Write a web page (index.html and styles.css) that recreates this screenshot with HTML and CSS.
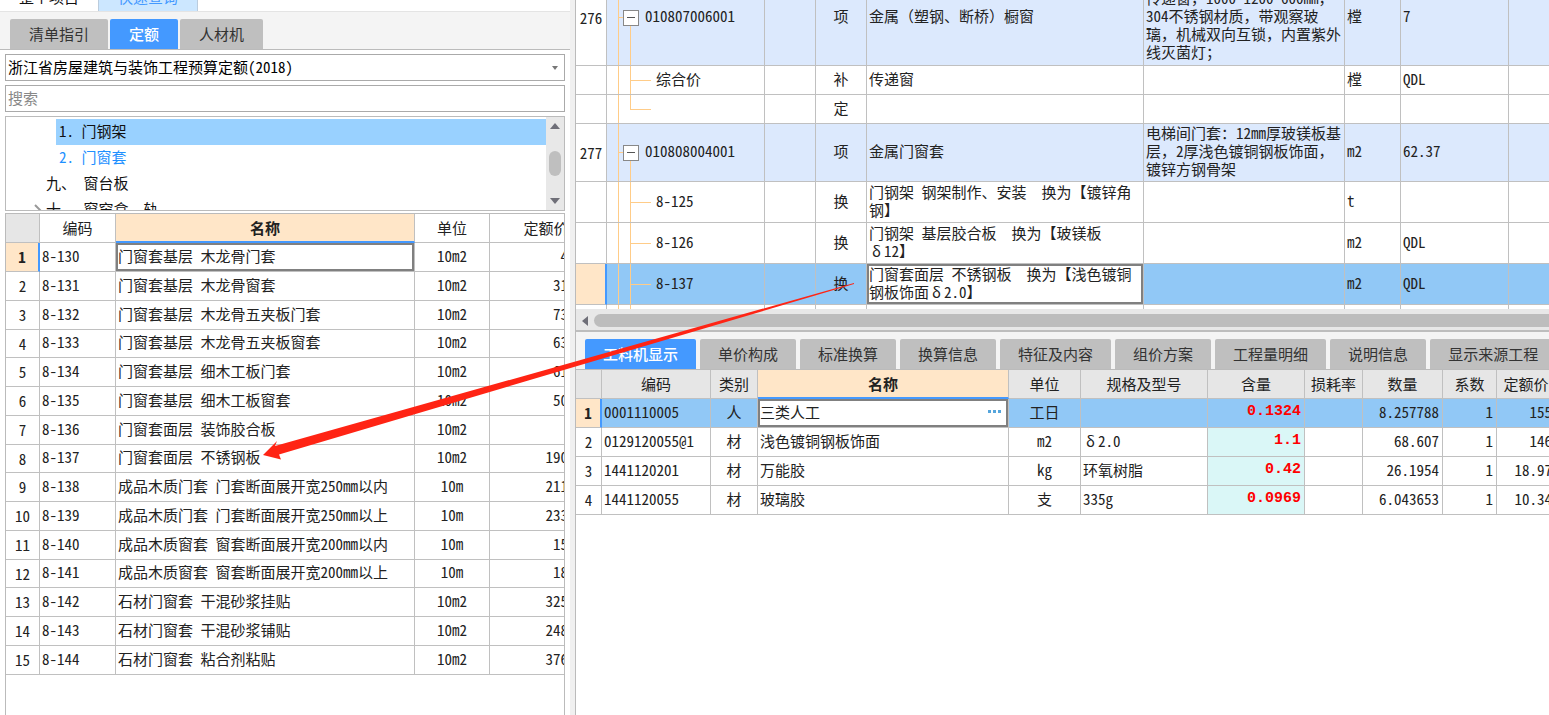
FILE: index.html
```html
<!DOCTYPE html>
<html lang="zh-CN">
<head>
<meta charset="utf-8">
<title>定额查询</title>
<link rel="stylesheet" href="styles.css">
</head>
<body>
<div class="app">
  <aside class="query">
    <nav class="views">
      <button class="view">整个项目</button>
      <button class="view view-on">快速查询</button>
    </nav>
    <nav class="tabs query-tabs">
      <button class="tab">清单指引</button>
      <button class="tab tab-on">定额</button>
      <button class="tab">人材机</button>
    </nav>
    <div class="query-body">
      <div class="picker">
        <select class="field" aria-label="定额库"><option>浙江省房屋建筑与装饰工程预算定额(2018)</option></select>
        <svg class="picker-arrow" viewBox="0 0 8 6" aria-hidden="true"><path d="M1 1h6L4 5z"/></svg>
      </div>
      <input class="field" type="text" placeholder="搜索" aria-label="搜索">
      <div class="tree">
        <ul class="tree-list">
          <li class="leaf leaf-on">1. 门钢架</li>
          <li class="leaf leaf-link">2. 门窗套</li>
          <li class="branch">九、 窗台板</li>
          <li class="branch"><svg class="chevron" viewBox="0 0 8 12" aria-hidden="true"><path d="M1 1l5 5-5 5"/></svg>十、 窗帘盒、轨</li>
        </ul>
        <div class="vbar">
          <svg viewBox="0 0 10 6" aria-hidden="true"><path d="M0 6h10L5 0z"/></svg>
          <span class="vthumb"></span>
          <svg viewBox="0 0 10 6" aria-hidden="true"><path d="M0 0h10L5 6z"/></svg>
        </div>
      </div>
      <div class="quota">
        <table class="grid quota-grid">
          <colgroup><col class="w34"><col class="w76"><col class="w299"><col class="w75"><col class="w113"></colgroup>
          <thead><tr><th class="corner"></th><th>编码</th><th class="current">名称</th><th>单位</th><th>定额价</th></tr></thead>
          <tbody>
            <tr class="picked"><th>1</th><td>8-130</td><td class="cursor">门窗套基层 木龙骨门套</td><td class="mid">10m2</td><td class="cut">4</td></tr>
            <tr><th>2</th><td>8-131</td><td>门窗套基层 木龙骨窗套</td><td class="mid">10m2</td><td class="cut">31</td></tr>
            <tr><th>3</th><td>8-132</td><td>门窗套基层 木龙骨五夹板门套</td><td class="mid">10m2</td><td class="cut">73</td></tr>
            <tr><th>4</th><td>8-133</td><td>门窗套基层 木龙骨五夹板窗套</td><td class="mid">10m2</td><td class="cut">63</td></tr>
            <tr><th>5</th><td>8-134</td><td>门窗套基层 细木工板门套</td><td class="mid">10m2</td><td class="cut">61</td></tr>
            <tr><th>6</th><td>8-135</td><td>门窗套基层 细木工板窗套</td><td class="mid">10m2</td><td class="cut">50</td></tr>
            <tr><th>7</th><td>8-136</td><td>门窗套面层 装饰胶合板</td><td class="mid">10m2</td><td class="cut"></td></tr>
            <tr><th>8</th><td>8-137</td><td>门窗套面层 不锈钢板</td><td class="mid">10m2</td><td class="cut">190</td></tr>
            <tr><th>9</th><td>8-138</td><td>成品木质门套 门套断面展开宽250mm以内</td><td class="mid">10m</td><td class="cut">211</td></tr>
            <tr><th>10</th><td>8-139</td><td>成品木质门套 门套断面展开宽250mm以上</td><td class="mid">10m</td><td class="cut">233</td></tr>
            <tr><th>11</th><td>8-140</td><td>成品木质窗套 窗套断面展开宽200mm以内</td><td class="mid">10m</td><td class="cut">15</td></tr>
            <tr><th>12</th><td>8-141</td><td>成品木质窗套 窗套断面展开宽200mm以上</td><td class="mid">10m</td><td class="cut">18</td></tr>
            <tr><th>13</th><td>8-142</td><td>石材门窗套 干混砂浆挂贴</td><td class="mid">10m2</td><td class="cut">325</td></tr>
            <tr><th>14</th><td>8-143</td><td>石材门窗套 干混砂浆铺贴</td><td class="mid">10m2</td><td class="cut">248</td></tr>
            <tr><th>15</th><td>8-144</td><td>石材门窗套 粘合剂粘贴</td><td class="mid">10m2</td><td class="cut">376</td></tr>
          </tbody>
        </table>
      </div>
    </div>
  </aside>

  <main class="work">
    <section class="bill">
      <table class="grid bill-grid">
        <colgroup><col class="w31"><col class="w158"><col class="w51"><col class="w51"><col class="w277"><col class="w201"><col class="w56"><col class="w108"><col class="w108"></colgroup>
        <tbody>
          <tr class="item tall"><th>276</th><td class="code parent"><button class="fold" aria-label="折叠"></button>010807006001</td><td></td><td class="mid">项</td><td class="full">金属（塑钢、断桥）橱窗</td><td class="spec scrolled">传递窗<span class="full">，</span>1000*1200*600mm<span class="full">，</span><br>304不锈钢材质<span class="full">，</span>带观察玻<br>璃<span class="full">，</span>机械双向互锁<span class="full">，</span>内置紫外<br>线灭菌灯<span class="full">；</span></td><td>樘</td><td>7</td><td></td></tr>
          <tr class="h29"><th></th><td class="code child">综合价</td><td></td><td class="mid">补</td><td>传递窗</td><td></td><td>樘</td><td>QDL</td><td></td></tr>
          <tr class="h29"><th></th><td class="code child last"></td><td></td><td class="mid">定</td><td></td><td></td><td></td><td></td><td></td></tr>
          <tr class="item h58"><th>277</th><td class="code parent"><button class="fold" aria-label="折叠"></button>010808004001</td><td></td><td class="mid">项</td><td>金属门窗套</td><td class="spec">电梯间门套<span class="full">：</span>12mm厚玻镁板基<br>层<span class="full">，</span>2厚浅色镀铜钢板饰面<span class="full">，</span><br>镀锌方钢骨架</td><td>m2</td><td>62.37</td><td></td></tr>
          <tr class="h41"><th></th><td class="code child">8-125</td><td></td><td class="mid">换</td><td class="lines">门钢架 钢架制作、安装<span class="full">　</span>换为【镀锌角<br>钢】</td><td></td><td>t</td><td></td><td></td></tr>
          <tr class="h41"><th></th><td class="code child">8-126</td><td></td><td class="mid">换</td><td class="lines">门钢架 基层胶合板<span class="full">　</span>换为【玻镁板<br><span class="wide">δ</span>12】</td><td></td><td>m2</td><td>QDL</td><td></td></tr>
          <tr class="picked filled h41"><th></th><td class="code child">8-137</td><td></td><td class="mid">换</td><td class="lines cursor">门窗套面层 不锈钢板<span class="full">　</span>换为【浅色镀铜<br>钢板饰面<span class="wide">δ</span>2.0】</td><td></td><td>m2</td><td>QDL</td><td></td></tr>
          <tr class="h3"><th></th><td class="code child"></td><td></td><td></td><td></td><td></td><td></td><td></td><td></td></tr>
        </tbody>
      </table>
    </section>
    <div class="hbar">
      <svg viewBox="0 0 6 10" aria-hidden="true"><path d="M6 0v10L0 5z"/></svg>
      <span class="hthumb"></span>
    </div>
    <nav class="tabs work-tabs">
      <button class="tab tab-on">工料机显示</button>
      <button class="tab">单价构成</button>
      <button class="tab">标准换算</button>
      <button class="tab">换算信息</button>
      <button class="tab">特征及内容</button>
      <button class="tab">组价方案</button>
      <button class="tab">工程量明细</button>
      <button class="tab">说明信息</button>
      <button class="tab">显示来源工程</button>
    </nav>
    <section class="parts">
      <table class="grid parts-grid">
        <colgroup><col class="w26"><col class="w109"><col class="w47"><col class="w251"><col class="w72"><col class="w127"><col class="w97"><col class="w58"><col class="w80"><col class="w54"><col class="w59"></colgroup>
        <thead><tr><th></th><th>编码</th><th>类别</th><th class="current">名称</th><th>单位</th><th>规格及型号</th><th>含量</th><th>损耗率</th><th>数量</th><th>系数</th><th>定额价</th></tr></thead>
        <tbody>
          <tr class="picked filled"><th>1</th><td>0001110005</td><td class="mid">人</td><td class="cursor"><div class="editing">三类人工<button class="more" aria-label="更多"><svg viewBox="0 0 14 3" aria-hidden="true"><path d="M0 0h3v3H0zM5 0h3v3H5zM10 0h3v3h-3z"/></svg></button></div></td><td class="mid">工日</td><td></td><td class="rate">0.1324</td><td></td><td class="num">8.257788</td><td class="num">1</td><td class="num">155</td></tr>
          <tr><th>2</th><td>0129120055@1</td><td class="mid">材</td><td>浅色镀铜钢板饰面</td><td class="mid">m2</td><td><span class="wide">δ</span>2.0</td><td class="rate">1.1</td><td></td><td class="num">68.607</td><td class="num">1</td><td class="num">146</td></tr>
          <tr><th>3</th><td>1441120201</td><td class="mid">材</td><td>万能胶</td><td class="mid">kg</td><td>环氧树脂</td><td class="rate">0.42</td><td></td><td class="num">26.1954</td><td class="num">1</td><td class="num">18.97</td></tr>
          <tr><th>4</th><td>1441120055</td><td class="mid">材</td><td>玻璃胶</td><td class="mid">支</td><td>335g</td><td class="rate">0.0969</td><td></td><td class="num">6.043653</td><td class="num">1</td><td class="num">10.34</td></tr>
        </tbody>
      </table>
    </section>
  </main>
  <svg class="pointer" viewBox="0 0 600 180" aria-hidden="true"><path d="M594 3L15 166L17 161L3 175L21 179.500L19 174.500L594 4z"/></svg>
</div>
</body>
</html>
```
FILE: styles.css
```css
* { box-sizing: border-box; }

body {
  margin: 0;
  background: #fff;
  color: #222;
  font-family: "Noto Sans CJK SC", "Noto Sans", sans-serif;
  font-size: 15px;
  line-height: 20px;
  font-feature-settings: "hwid";
}

button, input, select {
  margin: 0;
  padding: 0;
  border: 0;
  border-radius: 0;
  background: none;
  color: inherit;
  font: inherit;
  font-feature-settings: inherit;
}

.app {
  position: relative;
  display: grid;
  grid-template-columns: minmax(0, 575fr) minmax(0, 974fr);
  height: 100vh;
  overflow: hidden;
}

/* Query panel */
.query {
  display: flex;
  flex-direction: column;
  min-height: 0;
  border-right: 5px solid #f0f0f0;
}

.views {
  display: flex;
  align-items: flex-end;
  flex: none;
  height: 12px;
  overflow: hidden;
  border-bottom: 1px solid #e4e4e4;
}

.view {
  flex: none;
  height: 28px;
  padding: 0 19px;
  color: #111;
}

.view-on {
  border: solid #bcd;
  border-width: 0 1px;
  background: #cce7ff;
  color: #49f;
}

.tabs {
  display: flex;
  align-items: flex-end;
  flex: none;
  background: #f4f4f4;
  border-bottom: 1px solid #bbb;
  overflow: hidden;
}

.tab {
  flex: none;
  height: 30px;
  border-radius: 2px 2px 0 0;
  background: #bfbfbf;
  color: #333;
  white-space: nowrap;
}

.tab-on {
  background: #4499ff;
  color: #fff;
  font-weight: 500;
}

.query-tabs { gap: 2px; height: 38px; padding-left: 10px; }
.query-tabs .tab { padding: 0 19px; }

.query-body {
  display: flex;
  flex: 1;
  flex-direction: column;
  min-height: 0;
  padding: 4px 5px 0;
}

.field {
  display: block;
  flex: none;
  width: 100%;
  height: 27px;
  padding: 0 2px 2px;
  border: 1px solid #aaa;
  background: #fff;
  color: #000;
  appearance: none;
}

.field::placeholder { color: #888; opacity: 1; }

.picker { position: relative; flex: none; margin-bottom: 4px; }

.picker-arrow {
  position: absolute;
  top: 11px;
  right: 6px;
  width: 8px;
  height: 6px;
  fill: #777;
  pointer-events: none;
}

.tree {
  display: flex;
  flex: none;
  height: 95px;
  margin: 4px 0 2px;
  border: 1px solid #bbb;
  overflow: hidden;
}

.tree-list {
  flex: 1;
  margin: 0;
  padding: 2px 0 0;
  list-style: none;
  color: #111;
}

.tree-list li { height: 26px; line-height: 24px; }
.leaf { margin-left: 50px; padding-left: 3px; }
.leaf-on { background: #99d1ff; }
.leaf-link { color: #1e90ff; }
.branch { position: relative; padding-left: 40px; }

.chevron {
  position: absolute;
  top: 7px;
  left: 28px;
  width: 8px;
  height: 12px;
  fill: none;
  stroke: #999;
  stroke-width: 2;
}

.vbar {
  display: flex;
  flex: none;
  flex-direction: column;
  align-items: center;
  width: 18px;
  padding: 6px 0;
  background: #e8e8e8;
}

.vbar svg { width: 10px; height: 6px; fill: #6f6f78; }
.vthumb { width: 12px; height: 25px; margin: 22px 0 auto; border-radius: 6px; background: #bfbfbf; }

/* Data grids */
.grid {
  border-collapse: separate;
  border-spacing: 0;
  table-layout: fixed;
}

.grid th, .grid td {
  padding: 0 2px 3px;
  border: solid #c0c0c0;
  border-width: 0 1px 1px 0;
  overflow: hidden;
  white-space: nowrap;
  text-align: left;
  line-height: 18px;
}

.grid th { padding: 0; text-align: center; font-weight: 400; }
.grid .mid { text-align: center; }
.grid .num { text-align: right; padding-right: 3px; }
.grid thead th { height: 29px; }
.grid thead .current { background: #ffe6c8; border-bottom: 2px solid #4499ff; font-weight: 700; }
.grid .picked th { background: #ffe6c8; border-right: 2px solid #4499ff; font-weight: 700; }
.grid .filled td { background-color: #91c8f6; }
.grid .picked .cursor { background: #fff; box-shadow: inset 0 0 0 2px #808080; }
.full { font-feature-settings: normal; }
.wide { display: inline-block; width: 15px; text-align: center; }

.quota {
  flex: 1;
  min-height: 0;
  overflow: hidden;
  border: solid #bbb;
  border-width: 1px 1px 0;
}

.quota-grid { width: 597px; color: #222; }
.quota-grid .corner { background: #e6e6e6; }
.quota-grid tbody tr { height: 29px; }
.quota-grid tbody tr:nth-child(4n) { height: 28px; }
.quota-grid .cut { padding-right: 34px; text-align: right; }

.work {
  display: flex;
  flex-direction: column;
  min-width: 0;
  min-height: 0;
  border-left: 1px solid #bbb;
}

.bill {
  display: flex;
  flex: none;
  flex-direction: column;
  justify-content: flex-end;
  height: 309px;
  overflow: hidden;
}

.bill-grid { flex: none; width: 1041px; }
.item td { background-color: #dce9fd; }
.tall { height: 96px; }
.h29 { height: 29px; }
.h58 { height: 58px; }
.h41 { height: 41px; }
.h3 { height: 4px; }
.grid .h3 td, .grid .h3 th { padding-bottom: 0; border-bottom: 0; font-size: 0; line-height: 0; }
.grid .scrolled { padding-top: 17px; }

.code { background-repeat: no-repeat; }
.grid .code { position: relative; }

.grid .parent {
  padding-left: 38px;
  background-image: linear-gradient(#ffcc88, #ffcc88), linear-gradient(#ffcc88, #ffcc88), linear-gradient(#ffcc88, #ffcc88);
  background-position: 11px 0, 23px 100%, 11px 50%;
  background-size: 1px 100%, 1px 50%, 5px 1px;
}

.grid .child {
  padding-left: 49px;
  background-image: linear-gradient(#ffcc88, #ffcc88), linear-gradient(#ffcc88, #ffcc88), linear-gradient(#ffcc88, #ffcc88);
  background-position: 11px 0, 23px 0, 23px 50%;
  background-size: 1px 100%, 1px 100%, 21px 1px;
}

.grid .last { background-size: 1px 100%, 1px 50%, 21px 1px; }
.grid .h3 .child { background-size: 1px 100%, 1px 100%, 0 0; }

.fold {
  position: absolute;
  top: 50%;
  left: 16px;
  width: 16px;
  height: 16px;
  margin-top: -8px;
  border: 1px solid #888;
  background: #fff linear-gradient(#555, #555) center / 8px 1px no-repeat;
}

.hbar {
  display: flex;
  flex: none;
  align-items: center;
  gap: 6px;
  height: 23px;
  padding: 2px 0 2px 6px;
  background: #e8e8e8;
  box-shadow: inset 0 -2px #bdbdbd;
}

.hbar svg { flex: none; width: 6px; height: 10px; fill: #6f6f78; }
.hthumb { flex: 1; height: 13px; border-radius: 7px 0 0 7px; background: #bdbdbd; }

.work-tabs { gap: 4px; height: 38px; padding-left: 9px; }
.work-tabs .tab { padding: 0 18px; }

.parts { flex: 1; min-height: 0; overflow: hidden; }
.parts-grid { width: 980px; }
.parts-grid thead th { background: #e6e6e6; }
.parts-grid tbody tr { height: 29px; }

.grid .rate {
  padding-right: 3px;
  background: #daf7f7;
  color: #f00;
  font-family: "Liberation Mono", monospace;
  font-weight: 700;
  text-align: right;
}

.grid .filled .rate { background: #91c8f6; }

.editing { display: flex; align-items: center; justify-content: space-between; }
.more { width: 18px; height: 18px; }
.more svg { display: block; width: 14px; height: 3px; fill: #55a5dc; }

.w26 { width: 26px; }
.w31 { width: 31px; }
.w34 { width: 34px; }
.w47 { width: 47px; }
.w51 { width: 51px; }
.w54 { width: 54px; }
.w56 { width: 56px; }
.w58 { width: 58px; }
.w59 { width: 59px; }
.w72 { width: 72px; }
.w75 { width: 75px; }
.w76 { width: 76px; }
.w80 { width: 80px; }
.w97 { width: 97px; }
.w108 { width: 108px; }
.w109 { width: 109px; }
.w113 { width: 113px; }
.w127 { width: 127px; }
.w158 { width: 158px; }
.w201 { width: 201px; }
.w251 { width: 251px; }
.w277 { width: 277px; }
.w299 { width: 299px; }

/* Annotation arrow laid over both panels */
.pointer {
  position: absolute;
  top: 280px;
  left: 260px;
  width: 600px;
  height: 180px;
  fill: #ff2414;
  pointer-events: none;
}
```
